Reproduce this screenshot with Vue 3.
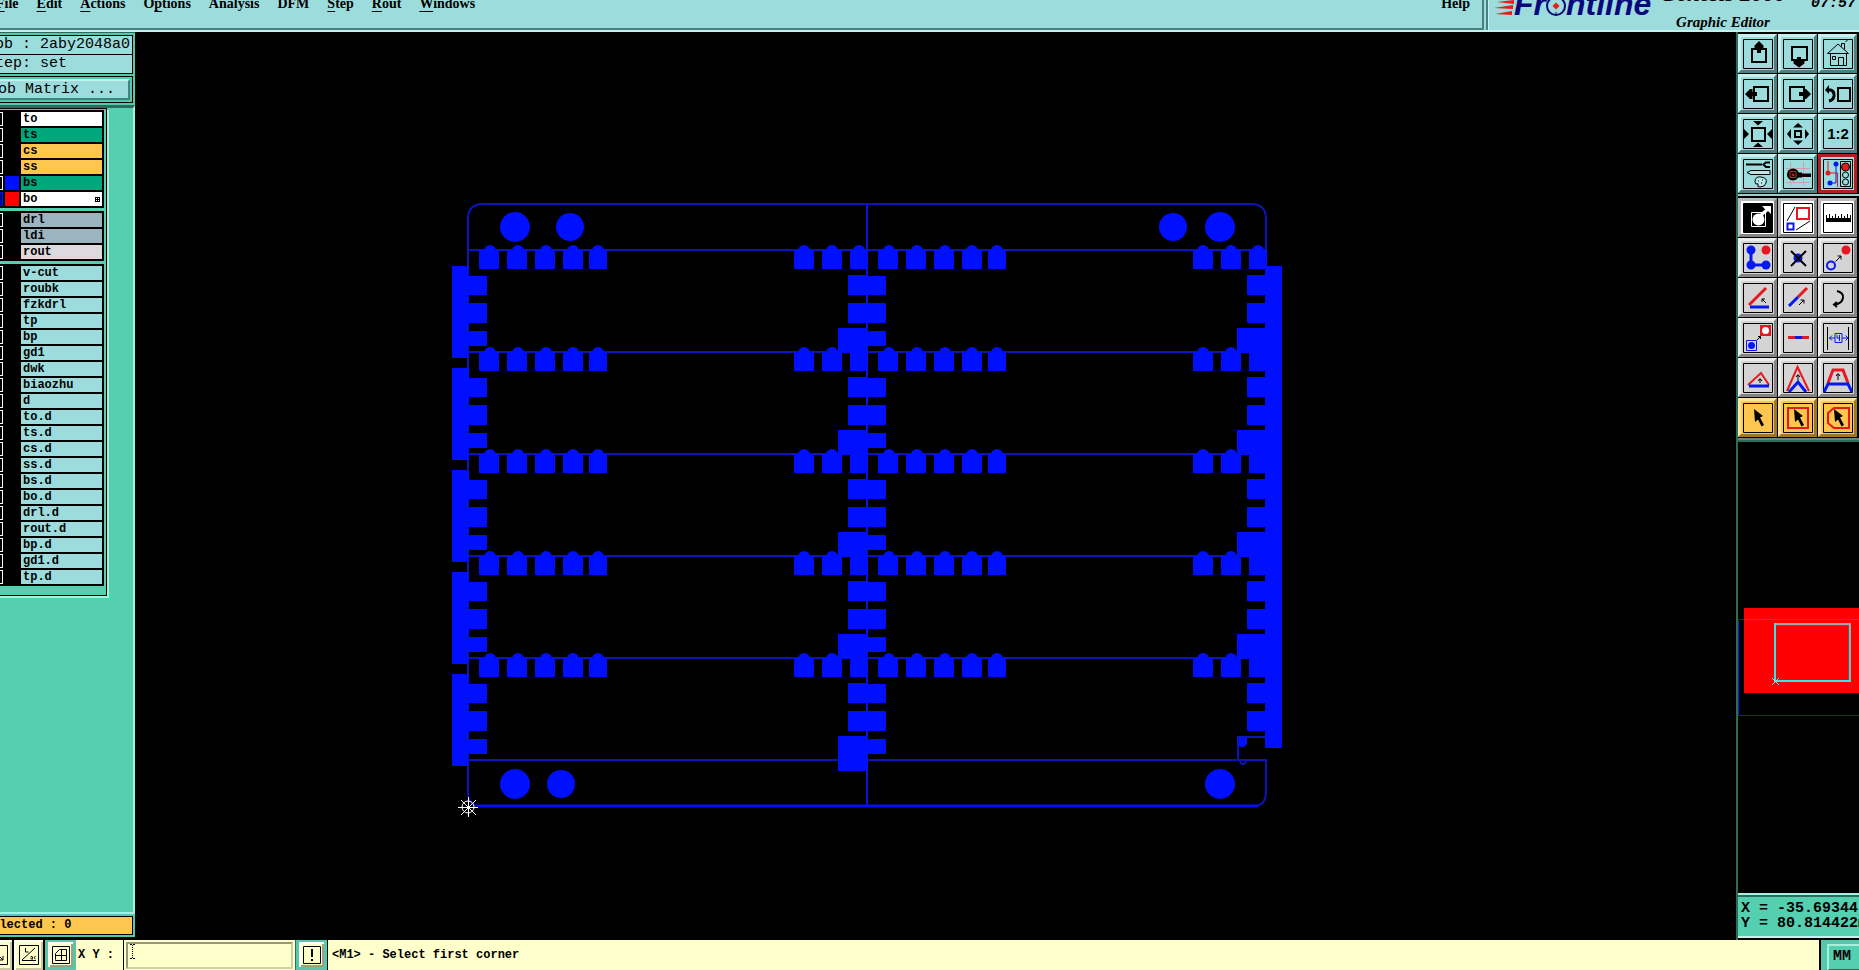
<script setup>
import { ref } from 'vue'

const menus = [
  ['', 'F', 'ile'],
  ['', 'E', 'dit'],
  ['', 'A', 'ctions'],
  ['O', 'p', 'tions'],
  ['Analysis', '', ''],
  ['DFM', '', ''],
  ['', 'S', 'tep'],
  ['', 'R', 'out'],
  ['', 'W', 'indows'],
]

const layerGroups = ref([
  [
    { name: 'to', tone: 'white' },
    { name: 'ts', tone: 'green' },
    { name: 'cs', tone: 'amber' },
    { name: 'ss', tone: 'amber' },
    { name: 'bs', tone: 'green', swatch: 'blue' },
    { name: 'bo', tone: 'white', swatch: 'red', shown: true, work: true },
  ],
  [
    { name: 'drl', tone: 'slate' },
    { name: 'ldi', tone: 'slate' },
    { name: 'rout', tone: 'silver' },
  ],
  [
    'v-cut', 'roubk', 'fzkdrl', 'tp', 'bp', 'gd1', 'dwk', 'biaozhu', 'd', 'to.d',
    'ts.d', 'cs.d', 'ss.d', 'bs.d', 'bo.d', 'drl.d', 'rout.d', 'bp.d', 'gd1.d', 'tp.d',
  ].map((name) => ({ name, tone: 'aqua' })),
])

const coords = ref('')

const K = '#000'
const R = '#e81820'
const B = '#0818f0'
const W = '#fff'

// shape helpers: l = stroked path, f = filled path, c = circle
const l = (d, stroke = K, w = 1) => ({ d, stroke, w, fill: 'none' })
const f = (d, fill = K) => ({ d, stroke: 'none', w: 0, fill })
const c = (x, y, r, fill = K, stroke = 'none', w = 1) => ({
  d: `M${x - r} ${y}a${r} ${r} 0 1 0 ${r * 2} 0a${r} ${r} 0 1 0 ${-r * 2} 0z`,
  fill,
  stroke,
  w,
})
const pointer = f('M11 6L20 13L17 14.5L21 22L18.5 23.5L15 16.5L12 19z')

const viewTools = [
  { name: 'Pan up', shapes: [l('M9 10h14v13h-14z', K, 2), f('M16 2L20.5 6.5V9H18V14H14V9H11.5V6.5z')] },
  { name: 'Pan down', shapes: [l('M9 8h15v13h-15z', K, 2), f('M14 18h4v4h3.5v2.5L16 28.5L10.5 24.5V22H14z')] },
  {
    name: 'Home',
    shapes: [
      l('M4.5 14.5L15 5L25.5 14.5zM7.5 14.5V26.5H23.5V14.5M15.5 26.5v-8h5v8M9.5 17.5h3v3h-3zM18.5 7.5V4.5h3V10.5M22.5 2.5l2-1'),
    ],
  },
  { name: 'Pan left', shapes: [l('M11 8h14v14h-14z', K, 2), f('M2 15L7 10H9.5V13H14V17H9.5V20H7z')] },
  { name: 'Pan right', shapes: [l('M7 8h14v14h-14z', K, 2), f('M28 15L23 10H20.5V13H16V17H20.5V20H23z')] },
  {
    name: 'Previous view',
    shapes: [l('M15 9h12v13h-12z', K, 2), l('M5 11h2.5q4 1 3.5 6q-.5 4-5 5', K, 3), f('M6 6v9L2 11z')],
  },
  {
    name: 'Zoom in',
    shapes: [
      l('M9 9h13v13h-13z', K, 2),
      f('M10 2h10l-5 4.5zM10 28h10l-5-4.5zM1 10l5 5l-5 5zM29 10l-5 5l5 5z'),
    ],
  },
  {
    name: 'Zoom out',
    shapes: [
      l('M12 12h6v6h-6z', K, 2),
      f('M15 4l5 4.5h-10zM15 26l5-4.5h-10zM4 15l4-5v10zM26 15l-4-5v10z'),
    ],
  },
  { name: 'Zoom one to two', shapes: [], text: '1:2' },
  {
    name: 'Options',
    shapes: [
      l('M3 5.5H19', K, 2),
      l('M27 3.5H23L20.5 5.5L23 8H27', K, 2),
      { d: 'M4 13.5l4-2h19v4H8z', fill: '#b8e8e8', stroke: K, w: 1 },
      { d: 'M12 23q0-6 6-5q7 1 5 6q-1 4-6 4q-3 0-2-2t-2-1z', fill: '#b8e8e8', stroke: K, w: 1 },
      l('M15 22h1M19 21h1M18 24h1'),
    ],
  },
  {
    name: 'Probe',
    shapes: [
      l('M3 9.5H27M3 23.5H27M7.5 3V27M20.5 3V27', '#c8a0b0'),
      c(10, 15.5, 6),
      f('M15 13.5H19V14.5H28V18H19V18.5H15z'),
      l('M7 12.5h6v6h-6zM9.5 15h1.5v1.5h-1.5z', R),
    ],
  },
  {
    name: 'Netlist',
    alert: true,
    shapes: [
      l('M5 2V14H14.5V28', R),
      l('M13 5V24H7', B),
      c(5, 14, 2.5, R),
      c(13, 5, 2.5, B),
      c(7, 24, 2.5, B),
      l('M17.5 2.5h10v25h-10z'),
      c(22.5, 8, 4, R, K),
      c(22.5, 16, 3, 'none', K),
      c(22.5, 23, 3, 'none', K),
    ],
  },
]

const editTools = [
  {
    name: 'Contour',
    lit: true,
    shapes: [
      f('M1 1h28v28h-28z'),
      l('M8.5 9.5h14v14h-14z', W),
      c(15.5, 16.5, 6, W),
      l('M18 12L25 6', W, 3),
      f('M19 3h9v8l-3-3l-3-2z', W),
    ],
  },
  { name: 'Scale', lit: true, shapes: [l('M14 5h12v11h-12z', R, 2), l('M4.5 20.5h6v6h-6z', B, 2), l('M12 4L4 18M27 18L13 27')] },
  {
    name: 'Measure',
    lit: true,
    shapes: [f('M3 15h25v4H3z'), l('M3.5 12v4M6.5 11v5M9.5 13v3M12.5 11v5M15.5 13v3M18.5 11v5M21.5 13v3M24.5 11v5M27.5 12v4')],
  },
  { name: 'Select net', shapes: [l('M8 7V22H23', B, 3), c(8, 7, 4.5, B), c(8, 22, 4.5, B), c(23, 22, 4.5, B), c(23, 7, 4.5, R)] },
  { name: 'Delete', shapes: [c(15, 15, 4.5, B), l('M8 8L23 23M23 8L8 23', K, 2)] },
  { name: 'Move', shapes: [c(23, 7, 4.5, R), c(8, 22.5, 4, 'none', B, 2), l('M12.5 18.5L18 13M14.5 13h3.5v3.5')] },
  { name: 'Rotate line', shapes: [l('M6 22L23 5', R, 3), l('M7 24H26', B, 3), l('M23 20L19 16M19 19v-3h3')] },
  { name: 'Extend line', shapes: [l('M15 14L24 5', R, 3), l('M6 23L15 14', B, 3), l('M16 22L21 17M17.5 17h3.5v3.5')] },
  { name: 'Undo', shapes: [l('M14 8Q21 10 20 15Q19 21 11 21.5', K, 2), l('M14 19L11 21.5L14 24', K, 2)] },
  {
    name: 'Substitute',
    shapes: [
      f('M17 2h11v11h-11z', R),
      c(22.5, 7.5, 3.5, W),
      l('M3.5 17.5h10v10h-10z', B),
      c(8.5, 22.5, 3.5, B),
      l('M14 17L17.5 13.5M15 13.5h2.5v2.5'),
    ],
  },
  { name: 'Break line', shapes: [l('M5 14.5H26', R, 3), l('M12 14.5H19', B, 3)] },
  {
    name: 'Spacing',
    shapes: [
      l('M4.5 4V27M25.5 4V27'),
      l('M12 10.5h7v9h-7zM6 15H12M19 15H25M9 12.5L6.5 15L9 17.5M22.5 12.5L25 15L22.5 17.5M14 12v3h3M16.5 12v6', B),
    ],
  },
  { name: 'Shift corner', shapes: [l('M5 22L18 10L26 22', R, 2), l('M6 23H26', B, 3), l('M17 20v-4M15 18l2-2.5l2 2.5')] },
  { name: 'Stretch corner', shapes: [l('M4 28L14.5 4L26 28', R, 2), l('M6 29L15 19L23 29', B, 3), l('M15 17v-5M13 14l2-2.5l2 2.5')] },
  { name: 'Stretch side', shapes: [l('M5 20L10 7H20L25 20', R, 3), l('M1 29L5 21H25L29 29', B, 3), l('M15 17v-6M13 13l2-2.5l2 2.5')] },
  { name: 'Select feature', amber: true, shapes: [pointer] },
  { name: 'Select in frame', amber: true, shapes: [l('M5 5h20v20h-20z', R, 2), pointer] },
  { name: 'Select in polygon', amber: true, shapes: [l('M11 5H26V25H11L5 20V10z', R, 2), pointer] },
]

const toolGroups = [viewTools, editTools]

// panel geometry: two columns of five boards
const rowPitch = 102
const colPitch = 399
const tabs = [
  { x: 479, w: 20, dome: 490 },
  { x: 507, w: 20, dome: 518 },
  { x: 535, w: 20, dome: 546 },
  { x: 563, w: 20, dome: 573 },
  { x: 589, w: 18, dome: 598 },
  { x: 794, w: 20, dome: 804 },
  { x: 822, w: 20, dome: 832 },
  { x: 850, w: 18, dome: 859 },
]

const boards = []
for (let row = 0; row < 5; row++) {
  for (let col = 0; col < 2; col++) {
    boards.push({ row, col, x: col * colPitch, y: row * rowPitch, last: row === 4 && col === 1 })
  }
}

const holes = [
  [515, 227, 15],
  [570, 227, 14],
  [1173, 227, 14],
  [1220, 227, 15],
  [515, 784, 15],
  [561, 784, 14],
  [1220, 784, 15],
]
</script>

<template>
  <div class="editor">
    <header class="topbar">
      <nav class="menubar" aria-label="Main menu">
        <button v-for="(m, i) in menus" :key="i" type="button">{{ m[0] }}<u>{{ m[1] }}</u>{{ m[2] }}</button>
        <button type="button" class="help">Help</button>
      </nav>
      <div class="brand">
        <div class="logo">
          <svg class="streaks" width="20" height="16" viewBox="0 0 20 16" aria-hidden="true">
            <path d="M3 2L20 0V4zM0 8L19 5V9zM1 14L18 11V15z" fill="#f01818" />
          </svg>
          <span>Fr</span>
          <svg class="target" width="20" height="20" viewBox="0 0 20 20" aria-hidden="true">
            <circle cx="10" cy="10" r="9" fill="none" stroke="#08087c" stroke-width="2" />
            <path d="M10 0v4M10 16v4" stroke="#08087c" />
            <path d="M10 6.5l3.5 3.5-3.5 3.5-3.5-3.5z" fill="#f01818" />
          </svg>
          <span>ntline</span>
        </div>
        <div class="product">
          <strong>Genesis 2000</strong>
          <em>Graphic Editor</em>
        </div>
        <time class="clock">07:57</time>
      </div>
    </header>

    <main class="work">
      <aside class="side">
        <div class="side-inner">
          <div class="job">
            <p>Job : 2aby2048a0</p>
            <p>Step: set</p>
          </div>
          <div class="matrix-slot">
            <button type="button" class="matrix">Job Matrix ...</button>
          </div>
          <div class="layers">
            <div class="layer-frame">
              <div v-for="(group, g) in layerGroups" :key="g" class="group">
                <label v-for="layer in group" :key="layer.name" class="layer">
                  <input v-model="layer.shown" type="checkbox">
                  <span class="swatch" :class="layer.swatch"></span>
                  <span class="name" :class="layer.tone">
                    {{ layer.name }}
                    <svg v-if="layer.work" width="5" height="5" viewBox="0 0 5 5" aria-hidden="true">
                      <path d="M0 0h5v5h-5zM1 1v1h1v-1zM3 1v1h1v-1zM1 3v1h1v-1zM3 3v1h1v-1z" fill="#000" fill-rule="evenodd" />
                    </svg>
                  </span>
                </label>
              </div>
            </div>
          </div>
          <div class="selected"><p>Selected : 0</p></div>
        </div>
      </aside>

      <section class="canvas" aria-label="Graphic area">
        <svg viewBox="135 32 1601 908" width="100%" height="100%" aria-hidden="true">
          <g class="outline">
            <path d="M1266 266V219Q1266 204 1251 204H483Q468 204 468 219V792Q468 806 480 806" />
            <path d="M468 760H1266V791Q1266 806 1254 806" />
            <path v-for="n in 5" :key="n" :d="`M468 ${250 + (n - 1) * rowPitch}H1266`" />
            <path class="bright" d="M867 204V806" />
            <path class="bright heavy" d="M478 806H1258" />
          </g>
          <g class="copper">
            <circle v-for="(h, i) in holes" :key="i" :cx="h[0]" :cy="h[1]" :r="h[2]" />
            <g v-for="b in boards" :key="`${b.row}-${b.col}`" :transform="`translate(${b.x} ${b.y})`">
              <rect v-for="t in tabs" :key="t.x" :x="t.x" y="250" :width="t.w" height="19" />
              <circle v-for="t in tabs" :key="`d${t.x}`" :cx="t.dome" cy="251" r="6" />
              <path d="M468 276h19v19h-19zM468 303h19v20h-19zM468 331h19v15h-19z" />
              <path d="M848 275h20v20h-20zM848 303h20v20h-20z" />
              <rect v-if="!b.last" x="838" y="328" width="30" :height="b.row === 4 ? 35 : 25" />
              <rect v-if="b.col === 0" x="452" y="266" width="17" height="92" />
            </g>
            <rect x="1265" y="266" width="17" height="482" />
            <path d="M1238 737H1247V744L1244 747H1240L1238 745z" />
          </g>
          <path class="notch" d="M1266 737H1238V760M1240 760q0 4 3 4t3-4" />
          <g class="origin">
            <circle cx="468" cy="807" r="6" />
            <path d="M458 807.5h20M468.5 797v20M461 800l15 15M476 800l-15 15" />
          </g>
        </svg>
      </section>

      <aside class="tools">
        <div v-for="(group, g) in toolGroups" :key="g" class="tool-grid" :class="{ gray: g === 1 }">
          <button
            v-for="t in group"
            :key="t.name"
            type="button"
            :aria-label="t.name"
            :class="{ alert: t.alert, lit: t.lit, amber: t.amber }"
          >
            <svg width="30" height="30" viewBox="0 0 30 30" aria-hidden="true">
              <path class="frame" d="M.5 .5h29v29h-29z" />
              <path v-for="(s, i) in t.shapes" :key="i" :d="s.d" :fill="s.fill" :stroke="s.stroke" :stroke-width="s.w" />
              <text v-if="t.text" x="15" y="20" text-anchor="middle">{{ t.text }}</text>
            </svg>
          </button>
        </div>
        <div class="overview">
          <svg width="121" height="110" viewBox="1738 608 121 110" aria-hidden="true">
            <path d="M1744 608H1859V693H1744z" fill="#f00" />
            <path d="M1859 619.5H1738.5V715.5H1859" fill="none" stroke="#1818c8" />
            <path d="M1744 619.5H1859" stroke="#ff0090" />
            <path d="M1775 624H1850V681" fill="none" stroke="#a8a8a8" stroke-width="2" />
            <path d="M1776 625.5H1848.5V680" fill="none" stroke="#406868" />
            <path d="M1775 623V681H1851" fill="none" stroke="#30e8e8" stroke-width="2" />
            <path d="M1772 678l7 7M1779 678l-7 7" stroke="#90f0e0" />
          </svg>
        </div>
        <div class="readout">
          <p>X = -35.69344</p>
          <p>Y = 80.814422mm</p>
        </div>
      </aside>
    </main>

    <footer class="status">
      <button type="button" class="snap first" aria-label="Snap">
        <svg width="20" height="20" viewBox="0 0 20 20" aria-hidden="true">
          <path d="M.5 .5h19v19h-19zM5 15h10M12 12l3 3v-4" fill="none" stroke="#000" />
        </svg>
      </button>
      <button type="button" class="snap" aria-label="Angle mode">
        <svg width="20" height="20" viewBox="0 0 20 20" aria-hidden="true">
          <path d="M.5 .5h19v19h-19zM3 15.5H17M3 15L16 3M6.5 3v4h3M11.5 12q2-2 2 1t-2 0M16.5 11q-3 2 0 3" fill="none" stroke="#000" />
        </svg>
      </button>
      <button type="button" class="snap on" aria-label="Grid">
        <svg width="18" height="18" viewBox="0 0 18 18" aria-hidden="true">
          <path d="M.5 .5h17v17h-17zM3.5 13.5V7.5L7.5 3.5H14.5V14.5H3.5zM9.5 3.5v11M3.5 9.5h11" fill="none" stroke="#000" />
        </svg>
      </button>
      <label for="xy">X Y :</label>
      <div class="entry">
        <input id="xy" v-model="coords" type="text">
        <svg class="caret" width="5" height="15" viewBox="0 0 5 15" aria-hidden="true">
          <path d="M0 .5h2M3 .5h2M0 14.5h2M3 14.5h2" stroke="#000" />
          <path d="M2.5 1V14" stroke="#000" stroke-dasharray="1 1" />
        </svg>
      </div>
      <button type="button" class="snap on" aria-label="Alert">
        <svg width="18" height="18" viewBox="0 0 18 18" aria-hidden="true">
          <path d="M.5 .5h17v17h-17z" fill="none" stroke="#000" />
          <path d="M8 3h2v8h-2zM8 13h2v2h-2z" />
        </svg>
      </button>
      <output class="message">&lt;M1&gt; - Select first corner</output>
      <div class="units"><button type="button">MM</button></div>
    </footer>
  </div>
</template>

<style>
body {
  background: #000;
}
</style>

<style scoped>
.editor {
  display: flex;
  flex-direction: column;
  height: 100vh;
  overflow: hidden;
  background: #000;
  color: #000;
  font-family: "Liberation Mono", "DejaVu Sans Mono", monospace;
}

.editor * {
  box-sizing: border-box;
}

button {
  margin: 0;
  padding: 0;
  border: 0;
  background: none;
  color: inherit;
  font: inherit;
}

p {
  margin: 0;
}

svg {
  display: block;
}

/* top bar */
.topbar {
  display: flex;
  height: 32px;
  flex: none;
  overflow: hidden;
  background: #9cdcdc;
  border-bottom: 2px solid #c8f0ec;
}

.menubar {
  display: flex;
  flex: 1;
  align-items: flex-start;
  gap: 18px;
  margin-left: -4px;
  padding-right: 12px;
  border-right: 2px solid #4c8080;
  border-bottom: 2px solid #4c8080;
  font: bold 14px/16px "Liberation Serif", serif;
}

.menubar button {
  margin-top: -4px;
  white-space: nowrap;
}

.menubar u {
  text-underline-offset: 3px;
  text-decoration-thickness: 1px;
}

.menubar .help {
  margin-left: auto;
}

.brand {
  display: flex;
  width: 373px;
  margin-left: 2px;
  padding-left: 6px;
  border-left: 2px solid #4c8080;
  box-shadow: inset 1px 0 #c8f0ec;
}

.logo {
  display: flex;
  width: 164px;
  height: 20px;
  color: #08087c;
  font: italic bold 32px/32px "Liberation Sans", sans-serif;
}

.logo span {
  margin-top: -12px;
}

.target {
  margin-top: -4px;
}

.product {
  display: flex;
  flex-direction: column;
  align-items: center;
  width: 130px;
  margin-top: -18px;
  font-family: "Liberation Serif", serif;
  white-space: nowrap;
}

.product strong {
  font: italic bold 23px/24px "Liberation Serif", serif;
}

.product em {
  margin-top: 6px;
  font-size: 15px;
  font-weight: bold;
  line-height: 20px;
}

.clock {
  margin-top: -5px;
  margin-left: auto;
  padding-right: 3px;
  font: italic bold 15px/18px "Liberation Mono", monospace;
}

/* body */
.work {
  display: flex;
  flex: 1;
  min-height: 0;
}

.side {
  width: 135px;
  flex: none;
  overflow: hidden;
  padding-bottom: 3px;
}

.side-inner {
  display: flex;
  flex-direction: column;
  height: 100%;
  margin-left: -16px;
  padding-top: 2px;
  background: #54c8ac;
  border-top: 1px solid #2c6c5c;
}

.job {
  margin-right: 2px;
  border: 1px solid #000;
  background: #9cdcdc;
  font-size: 15px;
  line-height: 18px;
}

.job p {
  padding-left: 1px;
}

.job p + p {
  border-top: 1px solid #000;
}

.matrix-slot {
  margin: 2px 2px 2px 0;
  padding: 2px;
  border: 1px solid #000;
}

.matrix {
  display: block;
  width: 100%;
  border: 2px solid;
  border-color: #c8f0ec #4c8080 #4c8080 #c8f0ec;
  background: #9cdcdc;
  font-size: 15px;
  line-height: 17px;
  text-align: left;
}

.layers {
  flex: 1;
  border-top: 3px solid #2c6c5c;
  border-right: 2px solid #a8f0dc;
  border-bottom: 2px solid #a8f0dc;
  background: #54d0b0;
}

.layer-frame {
  width: 123px;
  padding: 1px 2px 9px 3px;
  border: solid #000;
  border-width: 1px 1px 1px 0;
  box-shadow: 2px 2px #a8f0dc;
}

.group {
  display: grid;
  gap: 2px;
  width: 117px;
  padding: 2px;
  background: #000;
}

.group + .group {
  margin-top: 3px;
}

.layer {
  display: grid;
  grid-template-columns: 14px 14px 81px;
  gap: 2px;
  height: 14px;
  font: bold 12px/14px "Liberation Mono", monospace;
}

.layer input {
  appearance: none;
  width: 14px;
  height: 14px;
  margin: 0;
  border: 1px solid #fff;
  background: #000;
}

.layer input:checked {
  border-color: #0010ff;
  background: #000890;
}

.swatch.blue {
  background: #0010ff;
}

.swatch.red {
  background: #f00;
}

.name {
  display: flex;
  align-items: center;
  justify-content: space-between;
  padding: 0 2px;
}

.name.white {
  background: #fff;
}

.name.green {
  background: #00a67c;
}

.name.amber {
  background: #ffc64f;
}

.name.slate {
  background: #9cb4bd;
}

.name.silver {
  background: #dcdadc;
}

.name.aqua {
  background: #9cdcdc;
}

.selected {
  padding: 2px 2px 2px 0;
}

.selected p {
  border: 1px solid #000;
  background: #ffc64f;
  font: bold 12px/17px "Liberation Mono", monospace;
}

/* drawing area */
.canvas {
  flex: 1;
  min-width: 0;
  overflow: hidden;
}

.outline path,
.notch {
  fill: none;
  stroke: #0c14c0;
  stroke-width: 2;
}

.outline .bright {
  stroke: #0814e0;
}

.outline .heavy {
  stroke: #0010ff;
  stroke-width: 3;
}

.copper {
  fill: #0010ff;
}

.origin {
  fill: none;
  stroke: #fff;
}

/* tools */
.tools {
  display: flex;
  flex-direction: column;
  width: 123px;
  flex: none;
  padding-bottom: 2px;
  border-left: 2px solid #2c6c5c;
}

.tool-grid {
  display: grid;
  grid-template-columns: repeat(3, 39px);
  gap: 1px;
  padding-top: 2px;
  padding-bottom: 1px;
  border-bottom: 2px solid #9ccccc;
}

.tool-grid.gray {
  border-color: #708080;
  box-shadow: 0 2px #2c6c5c;
}

.tool-grid button {
  display: grid;
  place-items: center;
  width: 39px;
  height: 39px;
  border: 3px solid;
  border-color: #c8f0ec #4c8080 #4c8080 #c8f0ec;
  background: #9cdcdc;
}

.tool-grid.gray button {
  border-color: #ececec #848484 #848484 #ececec;
  background: #d4d4d4;
}

.tool-grid.gray button.lit {
  border-color: #c0b8c0 #848484 #848484 #c0b8c0;
  background: #fff;
}

.tool-grid.gray button.amber {
  border-color: #ffe49c #a07820 #a07820 #ffe49c;
  background: #ffc64f;
}

.tool-grid button.alert {
  border-color: #b81c20;
}

.frame {
  fill: none;
  stroke: #000;
}

.tool-grid text {
  font: bold 15px "Liberation Sans", sans-serif;
}

.overview {
  display: flex;
  flex: 1;
  align-items: center;
  padding-bottom: 8px;
}

.readout {
  padding: 6px 0 5px 3px;
  overflow: hidden;
  border-top: 2px solid #a8f0dc;
  border-bottom: 2px solid #c8f0ec;
  background: #54d0b0;
  box-shadow: inset 0 2px #2c6c5c;
  font: bold 15px/15px "Liberation Mono", monospace;
  white-space: nowrap;
}

/* status bar */
.status {
  display: flex;
  height: 30px;
  flex: none;
  background: #ffffcc;
  font: bold 12px/30px "Liberation Mono", monospace;
}

.snap {
  display: grid;
  place-items: center;
  width: 31px;
  flex: none;
  border-right: 2px solid #000;
  box-shadow: inset 2px 2px #fffff0, inset -2px -2px #c8c8a0;
}

.snap.first {
  margin-left: -17px;
}

.snap.on {
  border: 3px solid #54c8ac;
  border-top-width: 2px;
  box-shadow: inset 2px 2px #fffff0, inset -2px -2px #a0a080;
}

.status label {
  width: 47px;
  padding-left: 2px;
  white-space: nowrap;
}

.entry {
  position: relative;
  width: 173px;
  padding: 2px 2px 0;
  border-left: 1px solid #000;
  border-right: 1px solid #2c6c5c;
}

.entry input {
  display: block;
  width: 100%;
  height: 27px;
  padding: 0 8px;
  border: 2px solid;
  border-color: #989878 #d0d0a8 #d0d0a8 #989878;
  border-radius: 0;
  background: #ffffcc;
  font: inherit;
  outline: 0;
}

.caret {
  position: absolute;
  top: 4px;
  left: 6px;
}

.message {
  flex: 1;
  padding-left: 4px;
  border-left: 1px solid #000;
}

.units {
  width: 40px;
  padding: 2px 0 1px 6px;
  border-left: 2px solid #000;
  background: #54c8ac;
}

.units button {
  width: 40px;
  height: 27px;
  padding-left: 4px;
  border: 2px solid;
  border-color: #a8f0dc #2c6c5c #2c6c5c #a8f0dc;
  background: #54d0b0;
  font-size: 15px;
  line-height: 20px;
  text-align: left;
}
</style>
